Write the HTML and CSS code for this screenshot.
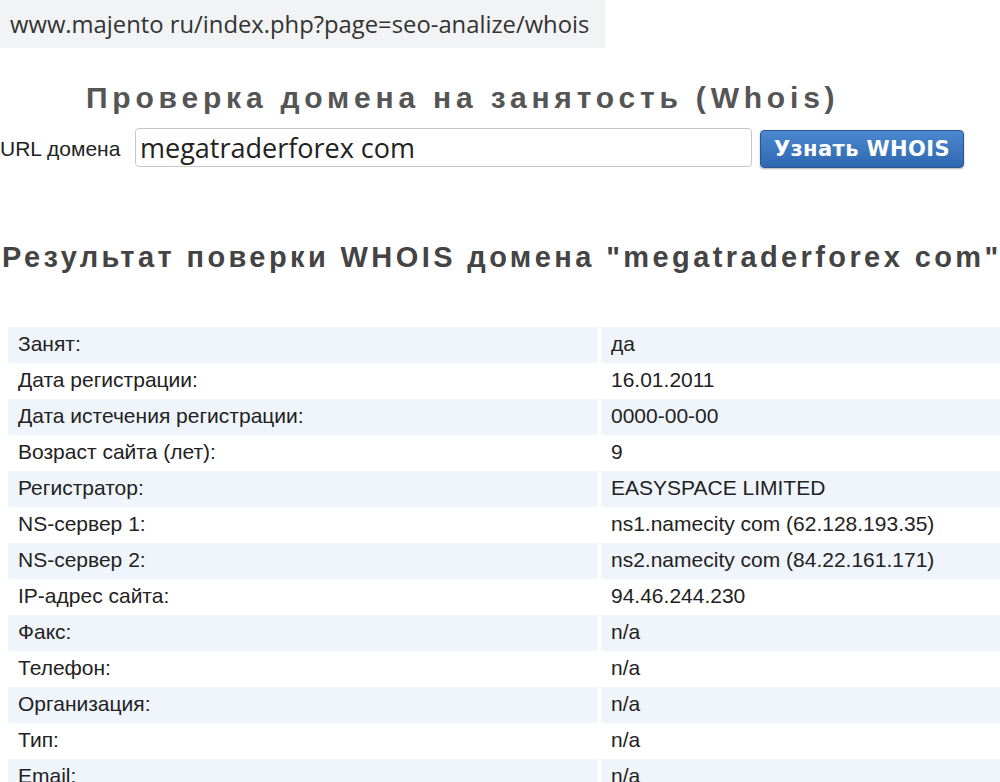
FILE: index.html
```html
<HTML>
	<HEAD>
		<meta http-equiv="content-type" content="text/html; charset=UTF-8">
		<link rel="stylesheet" href="styles.css">
	</HEAD>
	<BODY>
		<div id='addr'>www.majento ru/index.php?page=seo-analize/whois</div>

		<h1 class='title'>Проверка домена на занятость (Whois)</h1>
		<form class='check' onsubmit='return false'>
			<label for='domain'>URL домена</label>
			<input id='domain' type='text' value='megatraderforex com' />
			<input class='btn' type='submit' value='Узнать WHOIS' />
		</form>

		<h2 class='result'>Результат поверки WHOIS домена "megatraderforex com"</h2>

		<table class='whois'>
			<tr><td>Занят:</td><td>да</td></tr>
			<tr><td>Дата регистрации:</td><td>16.01.2011</td></tr>
			<tr><td>Дата истечения регистрации:</td><td>0000-00-00</td></tr>
			<tr><td>Возраст сайта (лет):</td><td>9</td></tr>
			<tr><td>Регистратор:</td><td>EASYSPACE LIMITED</td></tr>
			<tr><td>NS-сервер 1:</td><td>ns1.namecity com (62.128.193.35)</td></tr>
			<tr><td>NS-сервер 2:</td><td>ns2.namecity com (84.22.161.171)</td></tr>
			<tr><td>IP-адрес сайта:</td><td>94.46.244.230</td></tr>
			<tr><td>Факс:</td><td>n/a</td></tr>
			<tr><td>Телефон:</td><td>n/a</td></tr>
			<tr><td>Организация:</td><td>n/a</td></tr>
			<tr><td>Тип:</td><td>n/a</td></tr>
			<tr><td>Email:</td><td>n/a</td></tr>
		</table>
	</BODY>
</HTML>
```

FILE: styles.css
```css
BODY {
	margin		: 0;
	background-color: #fff;
	font-family	: "Liberation Sans", Arial, sans-serif;
	color		: #222;
	overflow	: hidden;
}
#addr {
	width		: 595px;
	height		: 48px;
	line-height	: 48px;
	padding-left	: 10px;
	background-color: #f1f3f4;
	font-family	: "Open Sans", "Noto Sans", sans-serif;
	font-size	: 23.8px;
	color		: #333;
	white-space	: nowrap;
}
.title {
	margin		: 30px 0 0 86px;
	font-size	: 30px;
	letter-spacing	: 4.8px;
	color		: #555;
	line-height	: 40px;
	white-space	: nowrap;
}
.check {
	display		: flex;
	align-items	: flex-start;
	margin		: 10px 0 0 0;
	height		: 42px;
}
.check label {
	flex-shrink	: 0;
	font-size	: 21px;
	width		: 135px;
	line-height	: 42px;
	white-space	: nowrap;
}
#domain {
	flex-shrink	: 0;
	width		: 607px;
	height		: 37px;
	padding		: 0 4px 0 4px;
	margin		: 0;
	border		: 1px solid #c8c8c8;
	border-radius	: 4px;
	font-family	: "Open Sans", "Noto Sans", sans-serif;
	font-size	: 27px;
	color		: #222;
	box-sizing	: content-box;
}
.btn {
	flex-shrink	: 0;
	margin		: 2px 0 0 8px;
	width		: 204px;
	height		: 38px;
	padding		: 0;
	border		: 1px solid #2a5590;
	border-radius	: 4px;
	background	: linear-gradient(#4a88d0, #2f67b0);
	color		: #fff;
	font-family	: "DejaVu Sans", Verdana, sans-serif;
	font-weight	: bold;
	font-size	: 21px;
	letter-spacing	: 0.4px;
	box-shadow	: 0 1px 2px rgba(0,0,0,0.3);
}
.result {
	margin		: 71px 0 0 2px;
	font-size	: 29px;
	letter-spacing	: 3.4px;
	color		: #444;
	white-space	: nowrap;
	line-height	: 32px;
}
.whois {
	margin		: 54px 0 0 5px;
	width		: 1010px;
	border-collapse	: separate;
	border-spacing	: 3px 0;
	font-size	: 21px;
	color		: #222;
}
.whois td {
	height		: 36px;
	padding		: 0 0 3px 10px;
	vertical-align	: middle;
	white-space	: nowrap;
}
.whois td:first-child {
	width		: 580px;
}
.whois tr:nth-child(odd) td {
	background-color: #f0f5fb;
}
```
